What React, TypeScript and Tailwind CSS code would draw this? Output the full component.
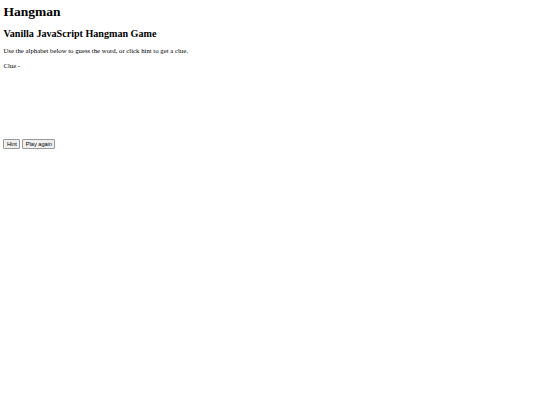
export default function App() {
  return (
    <div className="min-h-screen bg-white pl-[3.4px] text-black" style={{ fontFamily: '"Liberation Serif", serif' }}>
      <h1 className="pt-[4px] text-[13.5px] leading-[15px] font-bold">Hangman</h1>
      <h2 className="mt-[9px] text-[10.1px] leading-[11.6px] font-bold">Vanilla JavaScript Hangman Game</h2>
      <p className="mt-[7.5px] text-[6.75px] leading-[7.8px]">
        Use the alphabet below to guess the word, or click hint to get a clue.
      </p>
      <p className="mt-[6.75px] text-[6.75px] leading-[7.8px]">Clue -</p>
      <div className="h-[69.5px]" />
      <div className="flex gap-[2px]">
        <button
          type="button"
          className="rounded-[1px] border border-[#9a9a9a] bg-[#efefef] px-[2.5px] py-[1px] text-[5.6px] leading-[6.5px]"
          style={{ fontFamily: '"Liberation Sans", Arial, sans-serif' }}
        >
          Hint
        </button>
        <button
          type="button"
          className="rounded-[1px] border border-[#9a9a9a] bg-[#efefef] px-[2.5px] py-[1px] text-[5.6px] leading-[6.5px]"
          style={{ fontFamily: '"Liberation Sans", Arial, sans-serif' }}
        >
          Play again
        </button>
      </div>
    </div>
  );
}
